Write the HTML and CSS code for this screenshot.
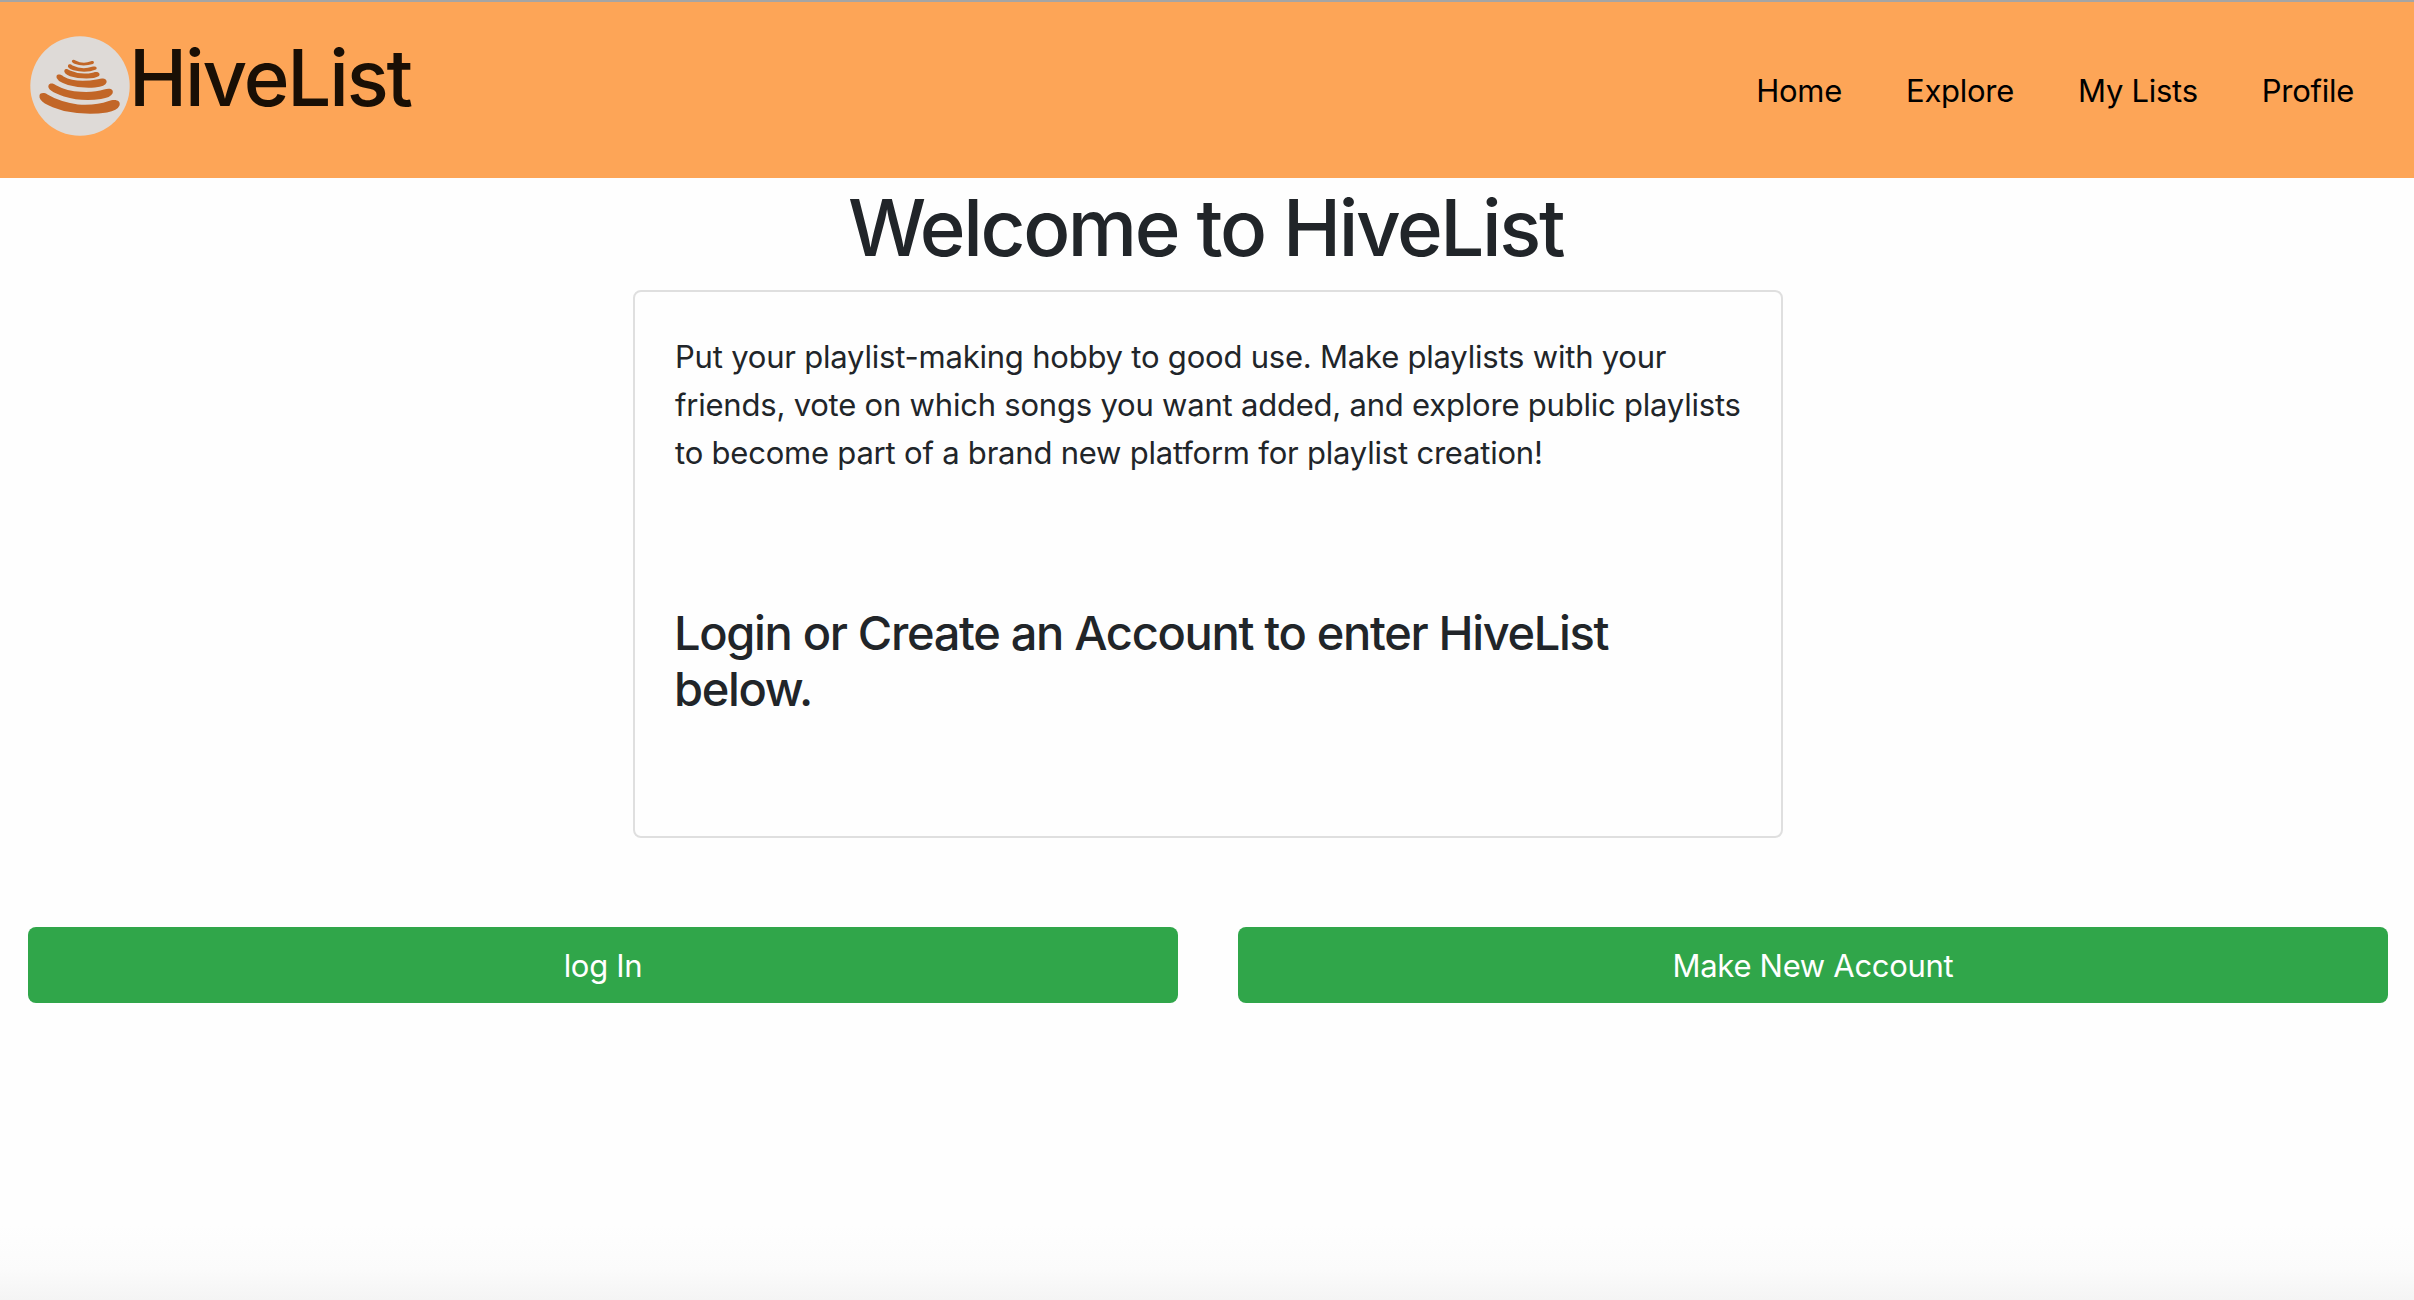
FILE: index.html
```html
<!DOCTYPE html>
<html lang="en">
<head>
<meta charset="utf-8">
<title>HiveList</title>
<link rel="stylesheet" href="styles.css">
</head>
<body>
<header class="navbar">
  <a class="brand" href="#">
    <svg class="brand-logo" viewBox="0 0 100 100" aria-hidden="true">
      <circle cx="50" cy="50" r="49.7" fill="#dedad7"/>
      <g fill="#c26627">
        <path d="M42 24.5C43 23 44.5 23.8 45.5 24.5Q53 28.5 61 25.3C63.5 24.3 65 26.5 63 28Q53 31 44.500 27.800Q41 26 42 24.500Z"/>
        <path d="M38 29.500C39 27.500 41 28.500 42.500 29.500Q52 34 62 30.800C65.500 29.500 68 31.500 66 33.500Q56 37.500 43.500 34.300Q37 32 38 29.500Z"/>
        <path d="M34.500 34C35.500 32.300 38 33.300 40 34.600Q51 39.500 63.500 36.400C67.500 35 71 37 69 40Q65 42.500 56.500 42.500Q47 42.500 40 40.200Q33 37.300 34.500 34Z"/>
        <path d="M26.500 40C27.500 38 30.500 38 33.500 40.500Q46 47.500 68 43.200C73 41.500 77.500 43 76.500 46.500Q75.500 50.500 65 51.500Q50 52.500 38 49Q25 44.500 26.500 40Z"/>
        <path d="M18.500 49.500C19.500 47 23 47 26 49.300Q37 55.500 51 55.800Q65 56.500 74 53.500C80.500 51.500 84 53.500 82.500 57.500Q80.500 61.500 71 63Q52 66 34 60.500Q16.500 54.500 18.500 49.500Z"/>
        <path d="M9.500 59.500C10 56.500 14.500 56.500 17.500 58.500Q29 65.500 48 68.500Q67 69.500 78 65.300C86 62.500 91 65 89.500 69.500Q87.500 74.500 77 76.500Q56 79.500 34 75Q8 67.500 9.500 59.500Z"/>
      </g>
    </svg>
    <span class="brand-name">HiveList</span>
  </a>
  <nav class="nav">
    <a class="nav-link" href="#">Home</a>
    <a class="nav-link" href="#">Explore</a>
    <a class="nav-link" href="#">My Lists</a>
    <a class="nav-link" href="#">Profile</a>
  </nav>
</header>
<main>
  <h1 class="title">Welcome to HiveList</h1>
  <section class="card">
    <p class="lead">Put your playlist-making hobby to good use. Make playlists with your<br>friends, vote on which songs you want added, and explore public playlists<br>to become part of a brand new platform for playlist creation!</p>
    <h3 class="prompt">Login or Create an Account to enter HiveList<br>below.</h3>
  </section>
  <div class="actions">
    <button class="btn">log In</button>
    <button class="btn">Make New Account</button>
  </div>
</main>
</body>
</html>
```

FILE: styles.css
```css
* { box-sizing: border-box; }

body {
  margin: 0;
  min-height: 1300px;
  font-family: Inter, "Liberation Sans", sans-serif;
  font-size: 31px;
  line-height: 48px;
  color: #212529;
  background: linear-gradient(#fefefe 0, #fefefe 1225px, #fbfbfb 1270px, #f4f4f4 1300px) no-repeat;
}

.navbar {
  display: flex;
  justify-content: space-between;
  height: 178px;
  padding: 34px 60px 0 30px;
  border-top: 2px solid #a5a5a5;
  background: #fda557;
}

.brand {
  display: flex;
  align-items: flex-start;
  color: #190f05;
  text-decoration: none;
}

.brand-logo { width: 100px; height: 100px; }

.brand-name {
  margin: -6px 0 0 -1px;
  font-size: 78px;
  font-weight: 500;
  line-height: 96px;
  letter-spacing: -2.15px;
}

.nav {
  display: flex;
  gap: 64px;
  padding-top: 31px;
  letter-spacing: -0.27px;
}

.nav-link { color: #000; text-decoration: none; }

.title {
  margin: 0;
  padding: 2px 3px 0 0;
  font-size: 78px;
  font-weight: 500;
  line-height: 96px;
  letter-spacing: -2.4px;
  text-align: center;
}

.card {
  width: 1150px;
  height: 548px;
  margin: 14px auto 0;
  padding: 41px 40px;
  border: 2px solid #dfdfdf;
  border-radius: 8px;
  transform: translateX(1px);
}

.lead {
  margin: 0;
  letter-spacing: -0.21px;
  white-space: nowrap;
}

.prompt {
  margin: 128px 0 0 -1px;
  font-size: 47px;
  font-weight: 500;
  line-height: 56px;
  letter-spacing: -1.33px;
  white-space: nowrap;
}

.actions {
  display: grid;
  grid-template-columns: 1fr 1fr;
  gap: 60px;
  margin-top: 89px;
  padding: 0 26px 0 28px;
}

.btn {
  height: 76px;
  padding: 1px 0 0;
  border: 0;
  border-radius: 8px;
  background: #30a64a;
  color: #fff;
  font: inherit;
  letter-spacing: -0.3px;
}
```
